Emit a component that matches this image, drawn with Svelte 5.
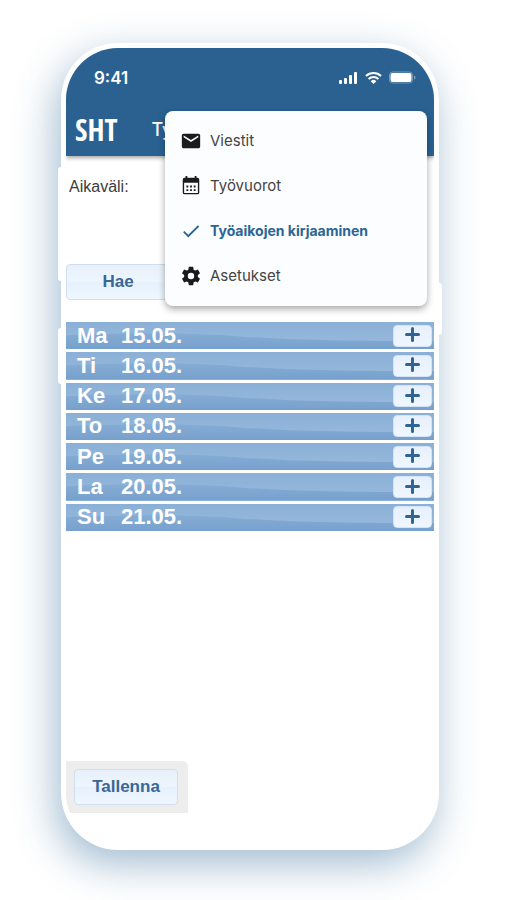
<script>
  const days = [
    { name: 'Ma', date: '15.05.' },
    { name: 'Ti', date: '16.05.' },
    { name: 'Ke', date: '17.05.' },
    { name: 'To', date: '18.05.' },
    { name: 'Pe', date: '19.05.' },
    { name: 'La', date: '20.05.' },
    { name: 'Su', date: '21.05.' }
  ];

  const menu = [
    { label: 'Viestit', icon: 'M20 4H4c-1.1 0-2 .9-2 2v12c0 1.1.9 2 2 2h16c1.1 0 2-.9 2-2V6c0-1.100-.9-2-2-2zm0 4l-8 5-8-5V6l8 5 8-5v2z' },
    { label: 'Työvuorot', icon: 'M19 3h-1V1h-2v2H8V1H6v2H5a2 2 0 0 0-2 2v14a2 2 0 0 0 2 2h14a2 2 0 0 0 2-2V5a2 2 0 0 0-2-2zm.500 16.500h-15V8.500h15zM7 11.500h2v2H7zm4 0h2v2h-2zm4 0h2v2h-2zM7 15.500h2v2H7zm4 0h2v2h-2zm4 0h2v2h-2z' },
    { label: 'Työaikojen kirjaaminen', icon: 'M9 16.200 4.800 12l-1.400 1.400L9 19 21 7l-1.400-1.400L9 16.200z', active: true },
    { label: 'Asetukset', icon: 'M12 15.5A3.5 3.5 0 0 1 8.500 12 3.500 3.500 0 0 1 12 8.500a3.500 3.500 0 0 1 3.500 3.500 3.500 3.500 0 0 1-3.500 3.500m7.430-2.530c.04-.32.07-.64.07-.97s-.03-.66-.07-1l2.110-1.630c.19-.15.24-.42.12-.64l-2-3.460c-.12-.22-.39-.31-.61-.22l-2.490 1c-.52-.39-1.060-.73-1.690-.98l-.37-2.650A.506.506 0 0 0 14 2h-4c-.25 0-.46.18-.5.42l-.37 2.650c-.63.25-1.170.59-1.690.98l-2.490-1c-.22-.09-.49 0-.61.22l-2 3.460c-.13.22-.07.49.12.64L4.570 11c-.04.34-.07.67-.07 1s.03.65.07.97l-2.110 1.660c-.19.15-.25.42-.12.64l2 3.460c.12.22.39.3.61.22l2.490-1.010c.52.4 1.060.74 1.690.99l.37 2.650c.04.24.25.42.5.42h4c.25 0 .46-.18.5-.42l.37-2.650c.63-.26 1.170-.59 1.690-.99l2.490 1.010c.22.08.49 0 .61-.22l2-3.460c.12-.22.07-.49-.12-.64l-2.110-1.660z' }
  ];
</script>

<div class="page">
  <main class="phone">
    <span class="side volume"></span>
    <span class="side action"></span>
    <span class="side power"></span>
    <div class="screen">
      <header>
        <div class="status">
          <span>9:41</span>
          <div class="indicators">
            <svg width="19" height="14" viewBox="0 0 19 14" fill="#fff" aria-hidden="true">
              <rect x="0" y="9" width="3" height="4" rx="1" />
              <rect x="5" y="7" width="3" height="6" rx="1" />
              <rect x="10" y="4" width="3" height="9" rx="1" />
              <rect x="15" y="1" width="3" height="12" rx="1" />
            </svg>
            <svg width="17" height="14" viewBox="0 0 17 14" fill="none" stroke="#fff" stroke-width="2" aria-hidden="true">
              <path d="M1 5a10.800 10.800 0 0 1 15 0" />
              <path d="M3.600 8a7 7 0 0 1 9.800 0" />
              <path d="M5.700 10.200a4 4 0 0 1 5.600 0L8.500 13z" fill="#fff" stroke="none" />
            </svg>
            <svg width="27" height="14" viewBox="0 0 27 14" aria-hidden="true">
              <rect x="0.500" y="1" width="23" height="11" rx="3" fill="none" stroke="#fff" stroke-opacity=".35" />
              <rect x="1.500" y="2" width="21" height="9" rx="2" fill="#fff" />
              <path d="M25 4.500v4c1-.4 1.500-1.100 1.500-2s-.5-1.600-1.500-2z" fill="#fff" fill-opacity=".4" />
            </svg>
          </div>
        </div>
        <div class="toolbar">
          <span class="brand">SHT</span>
          <h1>Työ</h1>
        </div>
      </header>

      <p class="range">Aikaväli:</p>
      <button class="btn">Hae</button>

      <ul class="days">
        {#each days as day}
          <li>
            <svg class="wave" viewBox="0 0 368 27" preserveAspectRatio="none" aria-hidden="true">
              <defs>
                <linearGradient id="wave-{day.name}" x1="0" y1="0" x2="0" y2="1">
                  <stop offset="0" stop-color="#86acd4" />
                  <stop offset="1" stop-color="#76a0cd" />
                </linearGradient>
              </defs>
              <path d="M0 13C60 11 110 10 170 14S270 19 368 19V27H0z" fill="url(#wave-{day.name})" />
            </svg>
            <span class="name">{day.name}</span>
            <span class="date">{day.date}</span>
            <button class="add" aria-label="Lisää {day.name} {day.date}">
              <svg width="15" height="15" viewBox="0 0 15 15" stroke="#2f6496" stroke-width="3" stroke-linecap="round" aria-hidden="true">
                <path d="M7.500 1.500v12M1.500 7.500h12" />
              </svg>
            </button>
          </li>
        {/each}
      </ul>

      <div class="save"><button class="btn">Tallenna</button></div>

      <nav class="menu">
        {#each menu as item}
          <a href="#top" class:active={item.active}>
            <svg width="22" height="22" viewBox="0 0 24 24" fill="currentColor" aria-hidden="true"><path d={item.icon} /></svg>
            <span>{item.label}</span>
          </a>
        {/each}
      </nav>
    </div>
  </main>
</div>

<style>
  :global(body) {
    margin: 0;
    background: #fff;
  }
  .page {
    box-sizing: border-box;
    min-height: 100vh;
    padding: 43px 68px 50px 61px;
    display: flex;
    overflow: hidden;
    font-family: "Liberation Sans", Arial, sans-serif;
  }
  .phone {
    position: relative;
    flex: 1;
    display: flex;
    box-sizing: border-box;
    padding: 5px;
    border-radius: 57px;
    background: #fff;
    box-shadow: -5px 14px 40px rgba(50, 110, 155, 0.46);
  }
  .side {
    position: absolute;
    width: 8px;
    border-radius: 3px;
    background: #fff;
  }
  .volume {
    left: -3px;
    top: 124px;
    height: 114px;
  }
  .action {
    left: -3px;
    top: 285px;
    height: 56px;
  }
  .power {
    right: -3px;
    top: 240px;
    height: 52px;
  }
  .screen {
    position: relative;
    flex: 1;
    min-width: 0;
    display: flex;
    flex-direction: column;
    align-items: flex-start;
    border-radius: 52px;
    overflow: hidden;
    background: #fff;
  }
  header {
    align-self: stretch;
    height: 108px;
    background: #2a6191;
    color: #fff;
    box-shadow: 0 2px 4px rgba(0, 0, 0, 0.35);
  }
  .status {
    display: flex;
    align-items: center;
    justify-content: space-between;
    height: 24px;
    padding: 18px 18px 14px 28px;
    font: 600 17px/24px Inter, sans-serif;
  }
  .indicators {
    display: flex;
    align-items: center;
    gap: 7px;
  }
  .toolbar {
    display: flex;
    align-items: center;
    height: 52px;
    padding: 0 9px;
    gap: 34px;
  }
  .brand {
    font: bold 30px/52px "Liberation Sans Narrow", "Open Sans Condensed", "DejaVu Sans Condensed", sans-serif;
  }
  h1 {
    margin: 0;
    min-width: 0;
    overflow: hidden;
    white-space: nowrap;
    font: 500 18px/24px Inter, sans-serif;
  }
  .range {
    margin: 19px 3px 65px;
    font-size: 16px;
    line-height: 24px;
    color: #3c3c3c;
  }
  .btn {
    box-sizing: border-box;
    width: 104px;
    height: 36px;
    padding: 0;
    border: 1px solid #cfdfee;
    border-radius: 4px;
    background: linear-gradient(#e8f1fb 0, #edf5fe 50%, #e6f1fd 50%, #eff7ff 100%);
    color: #3a6795;
    font: bold 17px/20px "Liberation Sans", Arial, sans-serif;
  }
  .days {
    align-self: stretch;
    display: flex;
    flex-direction: column;
    gap: 3px;
    height: 209px;
    margin: 22px 0 0;
    padding: 0;
    list-style: none;
  }
  li {
    position: relative;
    flex: 1;
    display: grid;
    grid-template-columns: 44px 1fr 39px;
    align-items: center;
    padding: 0 2px 0 11px;
    background: linear-gradient(#8bb0d7, #93b6da 60%);
    color: #fff;
    font-size: 22px;
    font-weight: bold;
    line-height: 26px;
  }
  .wave {
    position: absolute;
    inset: 0;
    width: 100%;
    height: 100%;
  }
  .name,
  .date,
  .add {
    position: relative;
  }
  .add {
    display: flex;
    align-items: center;
    justify-content: center;
    height: 22px;
    padding: 0 0 2px;
    border: 1px solid #d3e3f5;
    border-radius: 4px;
    background: linear-gradient(#e6f0fc, #eff6ff);
  }
  .save {
    margin-top: auto;
    margin-bottom: 32px;
    padding: 8px 10px 8px 8px;
    border-radius: 0 6px 0 0;
    background: #ededed;
    display: flex;
  }
  .menu {
    position: absolute;
    top: 63px;
    left: 99px;
    right: 7px;
    box-sizing: border-box;
    padding: 7px 15px 8px;
    border-radius: 8px;
    background: #fcfdff;
    box-shadow: 0 3px 7px rgba(0, 0, 0, 0.35);
  }
  .menu a {
    display: flex;
    align-items: center;
    gap: 8px;
    height: 45px;
    color: #1b1b1d;
    font: 400 15px/20px Inter, sans-serif;
    text-decoration: none;
  }
  .menu span {
    color: #444;
  }
  .menu .active,
  .menu .active span {
    color: #2a6595;
    font-size: 14px;
    font-weight: 700;
  }
</style>
